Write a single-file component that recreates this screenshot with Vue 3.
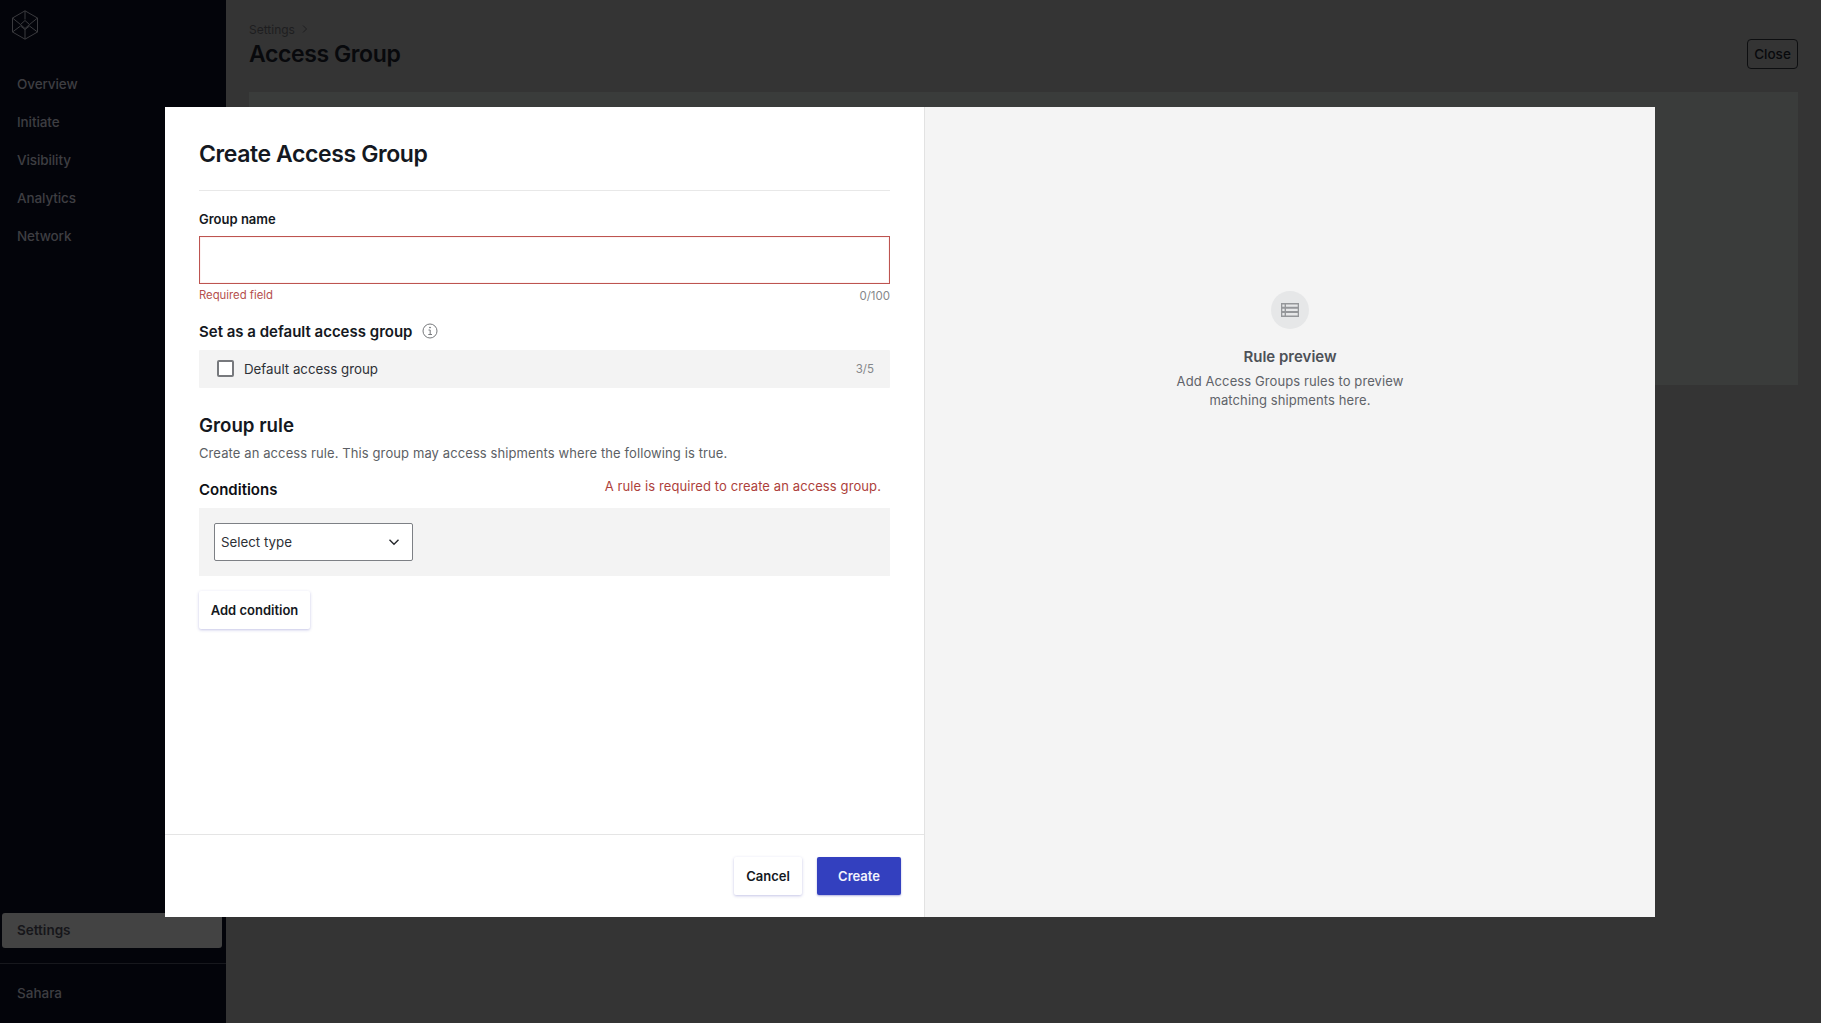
<script setup>
const navItems = ['Overview', 'Initiate', 'Visibility', 'Analytics', 'Network']
</script>

<template>
  <div class="shell">
    <aside class="sidebar">
      <svg class="logo" viewBox="0 0 26 30" fill="none" stroke="#3a3a3e" stroke-width="1">
        <path d="M13 .8 25.5 8v14L13 29.2.5 22V8z" />
        <path d="M13 .8V9.5M.5 8 8.5 14.5 13 18.5 17.5 14.5 25.5 8M.5 22 8.5 16 13 19.5M25.5 22 17.5 16 13 19.5M13 19V29.2M8.5 14.5 13 10.5 17.5 14.5" />
      </svg>
      <nav class="nav">
        <a v-for="item in navItems" :key="item" class="nav-item">{{ item }}</a>
      </nav>
      <div class="nav-active">Settings</div>
      <div class="org">Sahara</div>
    </aside>

    <main class="page">
      <header class="page-head">
        <div>
          <div class="crumb">
            Settings
            <svg width="10" height="10" viewBox="0 0 10 10" fill="none" stroke="#1e1e20" stroke-width="1"><path d="M3 1.5 6.5 5 3 8.5" /></svg>
          </div>
          <h1 class="page-title">Access Group</h1>
        </div>
        <button class="close-btn">Close</button>
      </header>
      <div class="page-card"></div>
    </main>

    <div class="overlay">
      <section class="modal">
        <div class="form-pane">
          <div class="form-body">
            <h2 class="modal-title">Create Access Group</h2>
            <label class="field-label">Group name</label>
            <div class="input-error"></div>
            <div class="field-meta">
              <span class="required">Required field</span>
              <span class="count">0/100</span>
            </div>
            <div class="default-head">
              <span>Set as a default access group</span>
              <svg width="16" height="16" viewBox="0 0 16 16" fill="none" stroke="#77797c" stroke-width="1">
                <circle cx="8" cy="8" r="7" />
                <path d="M6.5 7H8.2V11.5M6.3 11.5H10" />
                <circle cx="8" cy="4.6" r=".5" fill="#77797c" />
              </svg>
            </div>
            <div class="default-row">
              <span class="checkbox"></span>
              <span class="default-label">Default access group</span>
              <span class="default-count">3/5</span>
            </div>
            <h3 class="rule-title">Group rule</h3>
            <p class="rule-desc">Create an access rule. This group may access shipments where the following is true.</p>
            <div class="cond-head">
              <span class="cond-title">Conditions</span>
              <span class="cond-error">A rule is required to create an access group.</span>
            </div>
            <div class="cond-box">
              <div class="select">
                <span>Select type</span>
                <svg width="14" height="14" viewBox="0 0 14 14" fill="none" stroke="#26282c" stroke-width="1.4"><path d="M2.5 4.8 7 9.3l4.5-4.5" /></svg>
              </div>
            </div>
            <button class="btn add-btn">Add condition</button>
          </div>
          <footer class="modal-foot">
            <button class="btn cancel-btn">Cancel</button>
            <button class="btn create-btn">Create</button>
          </footer>
        </div>
        <div class="preview-pane">
          <div class="preview-icon">
            <svg width="18" height="14" viewBox="0 0 18 14">
              <path fill="#95979a" fill-rule="evenodd" d="M0 0H18V14H0ZM1.3 1.5V3.8H3.6V1.5ZM5 1.5V3.8H16.7V1.5ZM1.3 5.8V8.1H3.6V5.8ZM5 5.8V8.1H16.7V5.8ZM1.3 10.1V12.4H3.6V10.1ZM5 10.1V12.4H16.7V10.1Z" />
            </svg>
          </div>
          <div class="preview-title">Rule preview</div>
          <p class="preview-text">Add Access Groups rules to preview<br />matching shipments here.</p>
        </div>
      </section>
    </div>
  </div>
</template>

<style>
html, body { margin: 0; background: #343434; }
</style>

<style scoped>
.shell {
  position: relative;
  display: flex;
  width: 1821px;
  height: 1023px;
  overflow: hidden;
  font-family: Inter, "Liberation Sans", sans-serif;
  background: #343434;
}
.sidebar {
  width: 226px;
  flex: none;
  display: flex;
  flex-direction: column;
  background: #03040a;
  box-sizing: border-box;
}
.logo {
  width: 26px;
  height: 30px;
  margin: 10px 0 0 12px;
  flex: none;
}
.nav {
  display: flex;
  flex-direction: column;
  flex: 1;
  padding: 25px 0 0 17px;
}
.nav-item {
  height: 38px;
  line-height: 38px;
  font-size: 13.5px;
  letter-spacing: -0.1px;
  font-weight: 500;
  color: #3e3e42;
}
.nav-active {
  margin: 0 4px 15px 2px;
  height: 35px;
  line-height: 35px;
  padding-left: 15px;
  background: #434343;
  border-radius: 3px;
  font-size: 13.5px;
  font-weight: 600;
  color: #16161a;
}
.org {
  height: 59px;
  border-top: 1px solid #17181d;
  padding-left: 17px;
  line-height: 59px;
  font-size: 13.5px;
  font-weight: 500;
  color: #3e3e42;
}
.page {
  flex: 1;
  padding: 22px 23px 0;
  min-width: 0;
}
.page-head {
  display: flex;
  justify-content: space-between;
  align-items: flex-end;
  height: 47px;
}
.crumb {
  display: flex;
  align-items: center;
  gap: 5px;
  height: 16px;
  font-size: 12px;
  color: #1e1e20;
}
.page-title {
  margin: 2px 0 0;
  font-size: 23px;
  line-height: 30px;
  font-weight: 600;
  letter-spacing: -0.4px;
  color: #08090c;
}
.close-btn {
  width: 51px;
  height: 30px;
  padding: 0;
  background: transparent;
  border: 1px solid #0d0e10;
  border-radius: 4px;
  font: 500 13.5px Inter, sans-serif;
  color: #08090c;
}
.page-card {
  height: 293px;
  margin-top: 23px;
  background: #3a3c3b;
}
.overlay {
  position: absolute;
  inset: 107px 166px 106px 165px;
  display: flex;
}
.modal {
  flex: 1;
  display: flex;
  background: #fff;
}
.form-pane {
  width: 760px;
  box-sizing: border-box;
  flex: none;
  display: flex;
  flex-direction: column;
  border-right: 1px solid #e2e2e2;
  box-shadow: 1px 0 1px rgba(0, 0, 0, 0.04);
}
.form-body {
  flex: 1;
  padding: 0 34px;
  min-height: 0;
  display: flex;
  flex-direction: column;
  align-items: flex-start;
}
.modal-title {
  align-self: stretch;
  margin: 0 0 19px;
  padding: 30px 0 19px;
  line-height: 34px;
  font-size: 23px;
  font-weight: 600;
  letter-spacing: -0.4px;
  color: #141821;
  border-bottom: 1px solid #e8e8e8;
}
.field-label {
  font-size: 13px;
  line-height: 18px;
  font-weight: 600;
  color: #141821;
  margin-bottom: 8px;
}
.input-error {
  align-self: stretch;
  height: 48px;
  box-sizing: border-box;
  border: 1.5px solid #bd5450;
  box-shadow: inset 0 0 0 1px #fdf3f3;
}
.field-meta {
  align-self: stretch;
  display: flex;
  justify-content: space-between;
  margin-top: 2px;
  height: 18px;
  line-height: 18px;
  font-size: 11.3px;
}
.required { color: #b5504d; }
.count { color: #85878a; margin-top: 1px; font-size: 11.5px; }
.default-head {
  display: flex;
  align-items: center;
  gap: 10px;
  margin-top: 16px;
  height: 22px;
  font-size: 15px;
  font-weight: 600;
  color: #141821;
}
.default-row {
  align-self: stretch;
  box-sizing: border-box;
  display: flex;
  align-items: center;
  height: 38px;
  margin-top: 8px;
  padding: 0 16px 1px 18px;
  background: #f3f3f3;
  border-radius: 1px;
}
.checkbox {
  width: 17px;
  height: 17px;
  box-sizing: border-box;
  background: #fff;
  border: 2px solid #77797d;
  border-radius: 2px;
}
.default-label {
  margin-left: 10px;
  flex: 1;
  font-size: 13.3px;
  color: #2d3036;
}
.default-count {
  font-size: 11.5px;
  color: #85878a;
}
.rule-title {
  margin: 25px 0 0;
  height: 26px;
  line-height: 26px;
  font-size: 18.7px;
  font-weight: 600;
  color: #141821;
}
.rule-desc {
  margin: 4px 0 0;
  line-height: 20px;
  font-size: 13px;
  letter-spacing: 0.1px;
  color: #5c5f65;
}
.cond-head {
  align-self: stretch;
  display: flex;
  justify-content: space-between;
  padding-right: 9px;
  margin-top: 12px;
  height: 33px;
}
.cond-title {
  padding-top: 4px;
  line-height: 22px;
  font-size: 15px;
  font-weight: 600;
  color: #0d0f14;
}
.cond-error {
  line-height: 22px;
  font-size: 13px;
  letter-spacing: 0.1px;
  color: #ad3f3b;
}
.cond-box {
  align-self: stretch;
  box-sizing: border-box;
  height: 68px;
  padding: 15px;
  background: #f3f3f3;
}
.select {
  width: 199px;
  height: 38px;
  box-sizing: border-box;
  display: flex;
  align-items: center;
  justify-content: space-between;
  padding: 0 11px 0 6px;
  background: #fff;
  border: 1px solid #7d8085;
  border-radius: 2px;
  font-size: 13.3px;
  color: #2d3036;
}
.btn {
  height: 38px;
  padding: 0;
  border: none;
  border-radius: 2px;
  font: 600 13px Inter, sans-serif;
}
.add-btn {
  width: 111px;
  margin-top: 15px;
  background: #fff;
  color: #141821;
  box-shadow: 0 1px 3px rgba(60, 60, 170, 0.3);
}
.modal-foot {
  height: 83px;
  flex: none;
  box-sizing: border-box;
  display: flex;
  justify-content: flex-end;
  align-items: flex-start;
  gap: 15px;
  padding: 22px 23px 0 0;
  border-top: 1px solid #e5e5e5;
}
.cancel-btn {
  width: 68px;
  background: #fff;
  color: #141821;
  box-shadow: 0 1px 3px rgba(60, 60, 170, 0.3);
}
.create-btn {
  width: 84px;
  background: #3340bf;
  color: #f2f3fc;
  box-shadow: 0 1px 2px rgba(60, 60, 170, 0.4);
}
.preview-pane {
  flex: 1;
  display: flex;
  flex-direction: column;
  align-items: center;
  padding-top: 184px;
  background: #f4f4f4;
}
.preview-icon {
  width: 38px;
  height: 38px;
  border-radius: 50%;
  background: #e6e7e8;
  display: flex;
  align-items: center;
  justify-content: center;
}
.preview-title {
  margin-top: 16px;
  height: 24px;
  line-height: 24px;
  font-size: 15px;
  font-weight: 600;
  color: #4d5157;
}
.preview-text {
  margin: 3px 0 0;
  text-align: center;
  line-height: 19px;
  font-size: 13px;
  letter-spacing: 0.1px;
  color: #5f6369;
}
</style>
